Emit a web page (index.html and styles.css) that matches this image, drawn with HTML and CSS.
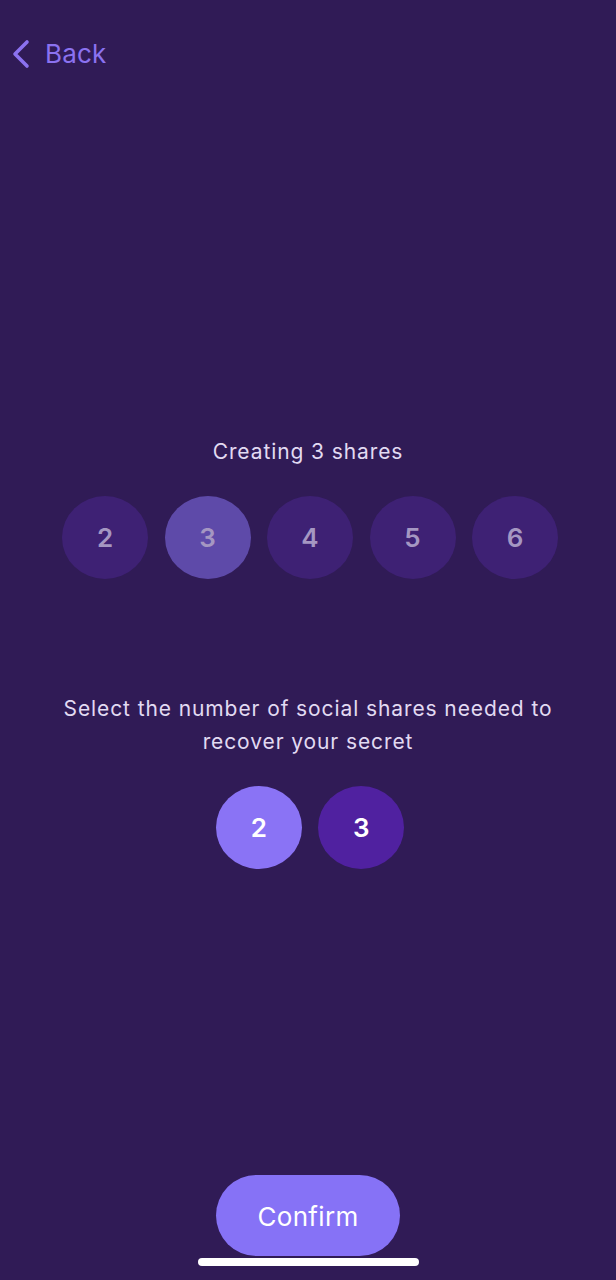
FILE: index.html
```html
<!DOCTYPE html>
<html>
<head>
<meta charset="utf-8">
<link rel="stylesheet" href="styles.css">
</head>
<body>
<div class="screen">
  <header class="nav">
    <button class="back">
      <svg class="chev" width="20" height="30" viewBox="0 0 20 30"><path d="M16 3 L4 15 L16 27" fill="none" stroke="#8b72f0" stroke-width="3.6" stroke-linecap="round" stroke-linejoin="round"/></svg>
      <span>Back</span>
    </button>
  </header>
  <section class="total">
    <p class="label">Creating 3 shares</p>
    <div class="row">
      <div class="dot">2</div>
      <div class="dot selected">3</div>
      <div class="dot">4</div>
      <div class="dot">5</div>
      <div class="dot">6</div>
    </div>
  </section>
  <section class="threshold">
    <p class="label">Select the number of social shares needed to<br>recover your secret</p>
    <div class="row">
      <div class="pick on">2</div>
      <div class="pick">3</div>
    </div>
  </section>
  <div class="spacer"></div>
  <footer class="foot">
    <button class="confirm">Confirm</button>
    <div class="home"></div>
  </footer>
</div>
</body>
</html>
```
FILE: styles.css
```css
* { box-sizing: border-box; }
html, body { margin: 0; padding: 0; }
body {
  background: #301b56;
  font-family: Inter, "Noto Sans", sans-serif;
  width: 616px;
  height: 1280px;
  overflow: hidden;
}
.screen {
  height: 1280px;
  display: flex;
  flex-direction: column;
}
.nav {
  padding: 38px 0 0 11px;
}
.back {
  background: none;
  border: 0;
  padding: 0;
  display: flex;
  align-items: center;
  gap: 14px;
  color: #8b72f0;
  font-family: inherit;
  font-size: 26px;
  line-height: 32px;
  letter-spacing: 0.2px;
}
.label {
  margin: 0;
  text-align: center;
  color: #e2daf2;
  font-size: 21px;
  line-height: 33px;
  letter-spacing: 0.9px;
}
.total { margin-top: 365px; }
.total .row { margin-top: 28px; }
.row {
  display: flex;
  justify-content: center;
  gap: 16.5px;
  padding-left: 4px;
}
.dot, .pick {
  width: 86px;
  height: 83px;
  border-radius: 50%;
  display: flex;
  align-items: center;
  justify-content: center;
  font-size: 26px;
  font-weight: 600;
}
.dot {
  background: #3e2174;
  color: #a597c2;
}
.dot.selected { background: #5e4aa9; }
.threshold { margin-top: 113px; }
.threshold .row { margin-top: 28px; }
.pick {
  background: #5021a0;
  color: #ffffff;
}
.pick.on { background: #8a73f5; }
.spacer { flex: 1; }
.foot {
  display: flex;
  flex-direction: column;
  align-items: center;
  padding-bottom: 14px;
}
.confirm {
  width: 184px;
  height: 81px;
  border: 0;
  border-radius: 41px;
  background: #8672f6;
  color: #ffffff;
  font-family: inherit;
  font-size: 26px;
  letter-spacing: 0.3px;
  padding-top: 3px;
}
.home {
  margin-top: 2px;
  width: 221px;
  height: 8px;
  border-radius: 4px;
  background: #ffffff;
}
```
